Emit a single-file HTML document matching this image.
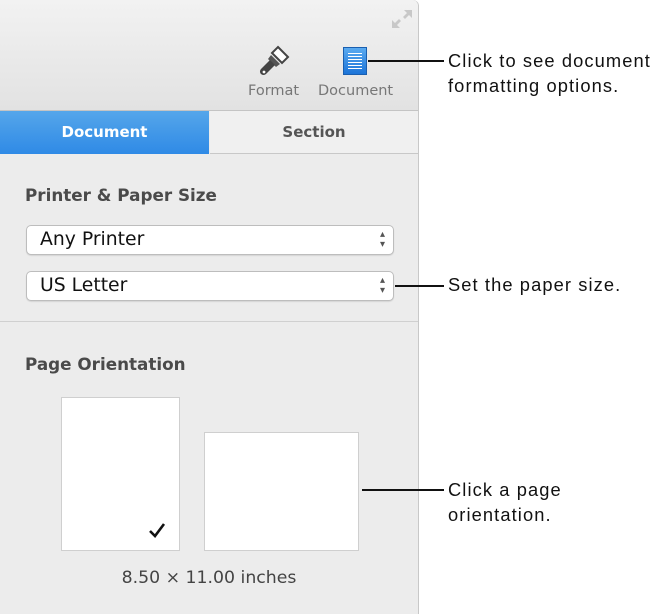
<!DOCTYPE html>
<html><head><style>
body{margin:0;width:668px;height:614px;background:#fff;position:relative;overflow:hidden;font-family:"DejaVu Sans","Liberation Sans",sans-serif}
.panel{position:absolute;left:0;top:0;width:418px;height:614px;background:#ececec;border-right:1px solid #c8c8c8;border-top-right-radius:6px}
.tool{position:absolute;left:0;top:0;width:418px;height:110px;background:linear-gradient(#f2f2f2,#e2e2e2);border-bottom:1px solid #c4c4c4;border-top-right-radius:6px}
.lbl{position:absolute;top:83px;font-size:14.5px;color:#777}
.tab1{position:absolute;left:0;top:111px;width:209px;height:43px;background:linear-gradient(#55a6ea,#2f8ae6);color:#fff;font-weight:bold;font-size:15px;text-align:center;line-height:43px}
.tab2{position:absolute;left:210px;top:111px;width:208px;height:42px;background:#f0f0f0;color:#555;font-weight:bold;font-size:15px;text-align:center;line-height:42px;border-bottom:1px solid #c8c8c8}
.h{position:absolute;left:25px;font-size:16.8px;font-weight:bold;color:#4a4a4a}
.sel{position:absolute;left:26px;width:368px;height:30px;background:#fff;border:1px solid #bdbdbd;border-radius:5px;box-sizing:border-box;font-size:18.8px;line-height:28px;padding-left:13px;color:#111;box-shadow:0 1px 1px rgba(0,0,0,.1)}
.sel:after{content:"▴\A▾";white-space:pre;position:absolute;right:8px;top:4px;font-size:10px;line-height:10px;color:#555}
.page{position:absolute;background:#fff;border:1px solid #cfcfcf}
.cap{position:absolute;left:448px;font-size:18.3px;color:#111;line-height:25px;font-family:"Liberation Sans",sans-serif;letter-spacing:1.1px}
.line{position:absolute;height:2px;background:#111}
</style></head><body>
<div class="panel">
<div class="tool">
<svg style="position:absolute;left:390px;top:8px" width="24" height="22" viewBox="0 0 24 22"><path d="M14 2h8v8l-3-3-4 4-2-2 4-4z M10 20H2v-8l3 3 4-4 2 2-4 4z" fill="#c8c8c8"/></svg>
<svg style="position:absolute;left:256px;top:44px" width="36" height="36" viewBox="0 0 36 36"><path d="M22 3l10 10-6 6-10-10z" fill="#fff" stroke="#444" stroke-width="2"/><path d="M15 11l9 9-4 3-8-8z" fill="#555"/><path d="M14 16l5 5-9 9a3.5 3.5 0 0 1-5-5z" fill="#444"/><circle cx="8" cy="28" r="1.4" fill="#fff"/></svg>
<div style="position:absolute;left:343px;top:47px;width:24px;height:28px;background:linear-gradient(#5aaaf0,#1c74d8);border:1px solid #1a5fb0;box-sizing:border-box"><div style="margin:5px 4px;height:16px;background:repeating-linear-gradient(#fff 0 1px,transparent 1px 3px)"></div></div>
<div class="lbl" style="left:248px">Format</div>
<div class="lbl" style="left:318px">Document</div>
</div>
<div class="tab1">Document</div>
<div class="tab2">Section</div>
<div class="h" style="top:185px">Printer &amp; Paper Size</div>
<div class="sel" style="top:225px">Any Printer</div>
<div class="sel" style="top:271px">US Letter</div>
<div style="position:absolute;left:0;top:321px;width:418px;height:1px;background:#d0d0d0"></div>
<div class="h" style="top:354px">Page Orientation</div>
<div class="page" style="left:61px;top:397px;width:117px;height:152px"><svg style="position:absolute;left:86px;top:124px" width="18" height="16" viewBox="0 0 18 16"><path d="M2 9l5 5L16 2" fill="none" stroke="#111" stroke-width="2.6"/></svg></div>
<div class="page" style="left:204px;top:432px;width:153px;height:117px"></div>
<div style="position:absolute;left:0;width:418px;text-align:center;top:568px;font-size:17.3px;color:#444">8.50 × 11.00 inches</div>
</div>
<div class="line" style="left:368px;top:60px;width:76px"></div>
<div class="line" style="left:395px;top:285px;width:49px"></div>
<div class="line" style="left:362px;top:489px;width:82px"></div>
<div class="cap" style="top:48px">Click to see document<br>formatting options.</div>
<div class="cap" style="top:272px">Set the paper size.</div>
<div class="cap" style="top:477px">Click a page<br>orientation.</div>
</body></html>
